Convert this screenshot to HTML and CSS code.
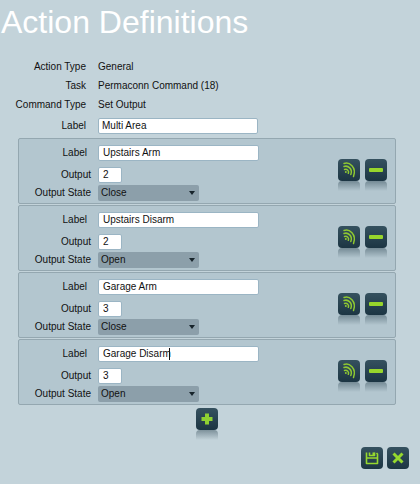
FILE: index.html
```html
<!DOCTYPE html>
<html lang="en">
<head>
<meta charset="utf-8">
<title>Action Definitions</title>
<link rel="stylesheet" href="styles.css">
</head>
<body>
<svg class="defs" aria-hidden="true">
  <symbol id="signal" viewBox="0 0 22 22"><g fill="none" stroke="#8fc832" stroke-width="1.500" stroke-linecap="round"><path d="M6 4.500C11 2.500 19 8 15.500 17.500"/><path d="M6 7.500C10 6 15 10 12.800 15.500"/><path d="M6.500 10.500C9 9.500 11.500 12 10.300 14.300"/></g><circle fill="#8fc832" cx="7.800" cy="13" r="1"/></symbol>
  <symbol id="minus" viewBox="0 0 22 22"><rect x="4" y="9" width="14" height="4" rx="1" fill="#98d62c"/></symbol>
  <symbol id="plus" viewBox="0 0 22 22"><path fill="#8fd032" d="M9 5.500h4V9h3.500v4H13v3.500H9V13H5.500V9H9z"/></symbol>
  <symbol id="save" viewBox="0 0 22 22"><path fill="none" stroke="#96d82e" stroke-width="1.600" stroke-linejoin="round" d="M5.500 5.500v11h11V7L15.500 6M5.500 11h11M8.500 5.500v3h5v-3"/><path fill="#96d82e" d="M11.500 5.500h2v3h-2z"/></symbol>
  <symbol id="cross" viewBox="0 0 22 22"><path fill="none" stroke="#96d82e" stroke-width="3" d="M6.500 6.500l9 9M15.500 6.500l-9 9"/></symbol>
</svg>
<main>
  <h1>Action Definitions</h1>
  <form>
    <dl class="summary">
      <dt>Action Type</dt><dd>General</dd>
      <dt>Task</dt><dd>Permaconn Command (18)</dd>
      <dt>Command Type</dt><dd>Set Output</dd>
    </dl>
    <div class="row main-label"><label for="name">Label</label><input class="wide" id="name" value="Multi Area"></div>

    <section class="card">
      <div class="fields">
        <div class="row first"><label for="l1">Label</label><input class="wide" id="l1" value="Upstairs Arm"></div>
        <div class="row"><label for="o1">Output</label><input class="num" id="o1" value="2"></div>
        <div class="row state"><label for="s1">Output State</label><select id="s1"><option>Close</option><option>Open</option></select></div>
      </div>
      <div class="actions">
        <button type="button" aria-label="Send"><svg><use href="#signal"/></svg></button>
        <button type="button" aria-label="Remove"><svg><use href="#minus"/></svg></button>
      </div>
    </section>

    <section class="card">
      <div class="fields">
        <div class="row first"><label for="l2">Label</label><input class="wide" id="l2" value="Upstairs Disarm"></div>
        <div class="row"><label for="o2">Output</label><input class="num" id="o2" value="2"></div>
        <div class="row state"><label for="s2">Output State</label><select id="s2"><option>Open</option><option>Close</option></select></div>
      </div>
      <div class="actions">
        <button type="button" aria-label="Send"><svg><use href="#signal"/></svg></button>
        <button type="button" aria-label="Remove"><svg><use href="#minus"/></svg></button>
      </div>
    </section>

    <section class="card">
      <div class="fields">
        <div class="row first"><label for="l3">Label</label><input class="wide" id="l3" value="Garage Arm"></div>
        <div class="row"><label for="o3">Output</label><input class="num" id="o3" value="3"></div>
        <div class="row state"><label for="s3">Output State</label><select id="s3"><option>Close</option><option>Open</option></select></div>
      </div>
      <div class="actions">
        <button type="button" aria-label="Send"><svg><use href="#signal"/></svg></button>
        <button type="button" aria-label="Remove"><svg><use href="#minus"/></svg></button>
      </div>
    </section>

    <section class="card">
      <div class="fields">
        <div class="row first"><label for="l4">Label</label><input class="wide" id="l4" value="Garage Disarm"><span class="caret"></span></div>
        <div class="row"><label for="o4">Output</label><input class="num" id="o4" value="3"></div>
        <div class="row state"><label for="s4">Output State</label><select id="s4"><option>Open</option><option>Close</option></select></div>
      </div>
      <div class="actions">
        <button type="button" aria-label="Send"><svg><use href="#signal"/></svg></button>
        <button type="button" aria-label="Remove"><svg><use href="#minus"/></svg></button>
      </div>
    </section>

    <div class="add"><button type="button" aria-label="Add"><svg><use href="#plus"/></svg></button></div>
    <div class="footer">
      <button type="button" aria-label="Save"><svg><use href="#save"/></svg></button>
      <button type="button" aria-label="Cancel"><svg><use href="#cross"/></svg></button>
    </div>
  </form>
</main>
</body>
</html>
```
FILE: styles.css
```css
* { box-sizing: border-box; }
body {
  margin: 0;
  background: #c3d3da;
  color: #111;
  font: 10px/16px "Liberation Sans", Arial, sans-serif;
}
.defs { display: none; }
h1 {
  margin: 0;
  padding: 4px 0 0 1px;
  color: #fff;
  font-size: 32px;
  line-height: 36px;
  font-weight: 400;
}
form { padding: 19px 24px 0 18px; }
.summary {
  display: grid;
  grid-template-columns: 68px 1fr;
  column-gap: 12px;
  row-gap: 3px;
  margin: 0;
}
.summary dt {
  display: flex;
  justify-content: flex-end;
  white-space: nowrap;
}
.summary dd { margin: 0; }
.row {
  display: flex;
  align-items: center;
  position: relative;
}
.row label {
  width: 72px;
  margin-right: 7px;
  text-align: right;
  white-space: nowrap;
}
.row.main-label label {
  width: 68px;
  margin-right: 12px;
}
.row.first label {
  padding-right: 4px;
}
.main-label { margin: 5px 0 4px; }
input, select {
  margin: 0;
  height: 16px;
  font: inherit;
  color: #111;
  border-radius: 2px;
}
input {
  padding: 0 4px;
  background: #fff;
  border: 1px solid #9bb5c4;
}
.main-label input { padding: 0 3px; }
.wide { width: 160px; }
.card .wide { width: 161px; }
.num { width: 24px; }
select {
  appearance: none;
  width: 101px;
  padding: 0 3px;
  border: 0;
  background: #8c9faa;
}
.state::after {
  content: "";
  position: absolute;
  left: 170px;
  top: 6px;
  border: solid transparent;
  border-width: 4px 3px 0;
  border-top-color: #17242b;
  pointer-events: none;
}
.card {
  display: flex;
  justify-content: space-between;
  margin-bottom: 1px;
  padding: 6px 8px 2px 0;
  border: 1px solid #94a7b0;
  border-radius: 2px;
  background: #b3c6cf;
}
.fields { display: grid; row-gap: 2px; }
.first { margin-bottom: 4px; }
.actions { display: flex; gap: 5px; padding-top: 14px; }
button {
  position: relative;
  width: 22px;
  height: 22px;
  padding: 0;
  border: 0;
  border-radius: 4px;
  background: linear-gradient(#35515f, #1c3543);
}
button::after {
  content: "";
  position: absolute;
  left: 0;
  top: 22px;
  width: 22px;
  height: 10px;
  border-radius: 4px 4px 0 0;
  background: linear-gradient(rgba(40, 65, 78, .45), rgba(40, 65, 78, 0));
}
button svg { display: block; width: 22px; height: 22px; }
.caret {
  position: absolute;
  left: 150px;
  top: 2px;
  width: 1px;
  height: 12px;
  background: #111;
}
.add { display: flex; justify-content: center; padding-top: 2px; }
.footer {
  display: flex;
  justify-content: flex-end;
  gap: 4px;
  margin-right: -13px;
  padding-top: 17px;
}
```
